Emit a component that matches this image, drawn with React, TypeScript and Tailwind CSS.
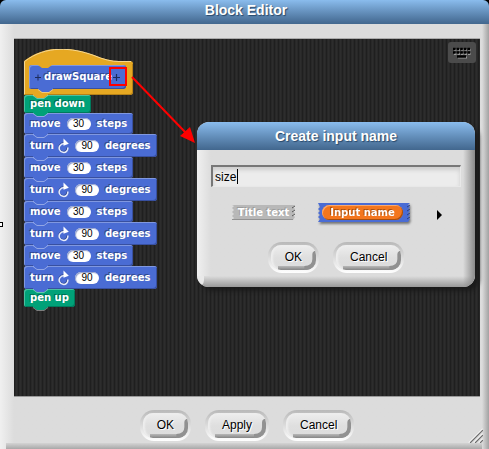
import { useState, type ReactNode } from "react";

const titleBar =
  "bg-linear-to-b from-[#8abced] to-[#42678e] text-center font-bold text-sm text-white [text-shadow:1px_1px_1px_#28486a] font-['Liberation_Sans',sans-serif]";

const blockText =
  "font-['DejaVu_Sans',sans-serif] text-[10px] font-bold leading-3 text-white whitespace-pre";

function PushButton({ children }: { children: ReactNode }) {
  return (
    <button
      type="button"
      className="rounded-[14px] bg-linear-to-b from-[#b9b9b9] via-[#dcdcdc] to-[#ffffff] p-[3px] font-['Liberation_Sans',sans-serif] text-xs text-black"
    >
      <span className="relative block h-[25px] overflow-hidden rounded-[10px] bg-linear-to-b from-[#eeeeee] via-[#dfdfdf] to-[#dcdcdc] px-[14px] leading-6 shadow-[inset_2px_0_2px_#eeeeee] [text-shadow:1px_1px_0_#ffffff]">
        <svg className="absolute right-0 bottom-0 h-[19px] w-full" aria-hidden="true">
          <defs>
            <linearGradient id="lip" x1="0" y1="0" x2="0" y2="1">
              <stop offset="0" stopColor="#b8b8b8" />
              <stop offset="1" stopColor="#858585" />
            </linearGradient>
          </defs>
          <rect x="7" y="15" width="100%" height="4" fill="url(#lip)" />
          <svg x="100%" overflow="visible">
            <path d="M-4 3 Q-4 1 -2 0 H0 V19 H-12 V15 Q-4 15 -4 8Z" fill="#919191" />
          </svg>
        </svg>
        <span className="relative">{children}</span>
      </span>
    </button>
  );
}

function Bump({ color }: { color: string }) {
  return (
    <svg className="absolute top-full left-[9px] z-10 -mt-px h-[5px] w-[15px]" viewBox="0 0 15 5" aria-hidden="true">
      <path d="M0 0H15V1L11 4H4L0 1Z" fill={color} />
      <path d="M0 1.5L4 4.5H11L15 1.5" fill="none" stroke="#ffffff" strokeOpacity=".4" />
    </svg>
  );
}

function Plus() {
  return (
    <svg className="h-[7px] w-[7px]" viewBox="0 0 7 7" aria-hidden="true">
      <path d="M3.5 0V7M0 3.5H7" stroke="#1d2c5c" strokeWidth="1.2" />
    </svg>
  );
}

function PenBlock({ text }: { text: string }) {
  return (
    <div className="relative h-[18px] w-fit rounded-[3px] bg-[#00a178] px-[6px] pt-[3px] shadow-[inset_1px_1px_0_#4cc0a0,inset_-1px_-1px_0_#007a5c]">
      <span className={`${blockText} block [text-shadow:-1px_-1px_0_#006b50]`}>{text}</span>
      <Bump color="#00a178" />
    </div>
  );
}

function MotionBlock({ turn, value, unit }: { turn?: boolean; value: string; unit: string }) {
  return (
    <div
      className={`relative flex w-fit items-center rounded-[3px] bg-[#4a6cd4] px-[6px] shadow-[inset_1px_1px_0_#8098e0,inset_-1px_-1px_0_#3850a0] ${turn ? "h-[23px]" : "h-[21px]"}`}
    >
      <span className={`${blockText} [text-shadow:-1px_-1px_0_#31488d]`}>{turn ? "turn" : "move"}</span>
      {turn && (
        <svg className="ml-1 h-4 w-[11px]" viewBox="0 0 11 16" aria-hidden="true">
          <path d="M9 9.5C9.3 12.5 7 14 4.7 13.6C1.4 13 0 9.6 1.6 7C2.6 5.4 4 4.6 6 4.6" fill="none" stroke="#31488d" strokeWidth="1.2" />
          <path d="M9.8 9.5C10.2 12.8 7.6 14.8 5 14.3C1.6 13.6 .2 10.3 1.8 7.8C2.8 6.2 4.2 5.4 6.2 5.4" fill="none" stroke="#e8edfb" strokeWidth="1.5" />
          <path d="M5.5 .5L10.8 5.8L5.5 7.8Z" fill="#ffffff" />
        </svg>
      )}
      <input
        aria-label={unit}
        defaultValue={value}
        className="mx-[6px] h-3 w-6 rounded-full bg-white text-center font-['Liberation_Sans',sans-serif] text-[10px] leading-3 text-black shadow-[inset_1px_1px_1px_#8d9cca]"
      />
      <span className={`${blockText} [text-shadow:-1px_-1px_0_#31488d]`}>{unit}</span>
      <Bump color="#4a6cd4" />
    </div>
  );
}

function HatBlock() {
  return (
    <div className="relative h-[46px] w-[109px] px-[5px] pt-4">
      <svg className="absolute inset-0 h-full w-full" viewBox="0 0 109 46" aria-hidden="true">
        <path d="M0 12C22 -5 48 -2 70 6Q84 12 95 12H106Q109 12 109 15V43Q109 46 106 46H0Z" fill="#e6a822" />
        <path d="M.5 45V12.5C22 -4 48 -1.5 70 6.5Q84 12.5 95 12.5H107" fill="none" stroke="#f5d793" />
        <path d="M108.5 15V43Q108.5 45.5 106 45.5H1" fill="none" stroke="#b58117" />
      </svg>
      <div className="relative flex h-6 w-[97px] items-center rounded-[3px] bg-[#4a6cd4] px-[6px] shadow-[inset_1px_1px_0_#8098e0,inset_-1px_-1px_0_#3850a0]">
        <svg className="absolute top-0 left-[9px] h-[3px] w-[14px]" viewBox="0 0 14 3" aria-hidden="true">
          <path d="M0 0L4 3H10L14 0Z" fill="#e6a822" />
        </svg>
        <Plus />
        <span className={`${blockText} ml-[3px] w-[67px] [text-shadow:-1px_-1px_0_#31488d]`}>drawSquare</span>
        <span className="ml-[2px] flex">
          <Plus />
        </span>
        <Bump color="#4a6cd4" />
        <span className="absolute top-[2px] right-[-1px] z-10 h-[19px] w-[18px] border-2 border-[#ff0000]" />
      </div>
      <Bump color="#e6a822" />
    </div>
  );
}

function InputDialog() {
  const [name, setName] = useState("size");
  return (
    <section
      role="dialog"
      aria-label="Create input name"
      className="absolute top-[83px] left-[183px] z-20 w-[278px] overflow-hidden rounded-xl bg-[#dcdcdc] shadow-[4px_4px_4px_#1b1b1b]"
    >
      <h2 className={`${titleBar} h-7 leading-7`}>Create input name</h2>
      <div className="bg-linear-to-r from-[#f0f0f0] via-[#dcdcdc] via-5% to-[#dcdcdc] px-[14px] pt-[15px]">
        <div className="relative">
          <input
            aria-label="Input name"
            value={name}
            onChange={(e) => setName(e.target.value)}
            className="block h-[22px] w-full border-t-2 border-l-2 border-r border-b border-t-[#777777] border-l-[#777777] border-r-[#e8e8e8] border-b-[#e8e8e8] bg-[#ececec] px-[2px] font-['Liberation_Sans',sans-serif] text-xs text-black shadow-[inset_0_3px_4px_#cdcdcd] outline-none"
          />
          <span className="absolute top-1 left-[26px] h-[15px] w-px bg-black" />
        </div>
        <div className="mt-4 flex h-[19px] items-center pl-[21px]">
          <label className="relative flex h-[15px] w-[63px] items-center justify-center">
            <input type="radio" name="kind" className="sr-only" />
            <svg className="absolute inset-0 h-full w-full" viewBox="0 0 63 15" aria-hidden="true">
              <path d="M0 0H63L61 2L63 4L61 6L63 8L61 10L63 12L61 15H0L2 13L0 11L2 9L0 7L2 5L0 3L2 1Z" fill="#b8b8b8" />
              <path d="M0 14.5H61" stroke="#929292" />
              <path d="M63 1L60 3M63 5L60 7M63 9L60 11" stroke="#555555" />
            </svg>
            <span className={`${blockText} relative [text-shadow:-1px_-1px_0_#9c9c9c]`}>Title text</span>
          </label>
          <label className="relative ml-[23px] flex h-[19px] w-[92px] items-center pl-1 drop-shadow-[1px_2px_1px_#777777]">
            <input type="radio" name="kind" className="sr-only" defaultChecked />
            <svg className="absolute inset-0 h-full w-full" viewBox="0 0 92 19" aria-hidden="true">
              <path d="M0 0H92L90 2L92 4L90 6L92 8L90 10L92 12L90 14L92 16L90 19H0L2 16L0 14L2 12L0 10L2 8L0 6L2 4Z" fill="#4a6cd4" />
              <path d="M92 2L89 4M92 6L89 8M92 10L89 12M92 14L89 16" stroke="#293f86" />
            </svg>
            <span
              className={`${blockText} relative h-[15px] w-[81px] rounded-full bg-[#f3761d] text-center leading-[15px] shadow-[inset_1px_1px_0_#f9a86d,inset_-1px_-1px_0_#a8500f] [text-shadow:-1px_-1px_0_#a8500f]`}
            >
              Input name
            </span>
          </label>
          <button type="button" aria-label="More options" className="ml-[27px]">
            <svg className="mt-1 h-[10px] w-[5px]" viewBox="0 0 5 10" aria-hidden="true">
              <path d="M0 0L5 5L0 10Z" fill="#000000" />
            </svg>
          </button>
        </div>
        <div className="flex justify-center gap-[14px] pt-5 pb-[3px]">
          <PushButton>OK</PushButton>
          <PushButton>Cancel</PushButton>
        </div>
      </div>
      <div className="h-[11px] bg-linear-to-b from-[#dcdcdc] to-[#999999]" />
      <div className="absolute top-7 right-0 bottom-0 w-3 bg-linear-to-r from-transparent to-[#8a8a8a]" />
      <div className="absolute bottom-0 left-0 h-[11px] w-[7px] rounded-br-full bg-[#e9e9e9]" />
    </section>
  );
}

function Arrow() {
  return (
    <svg className="absolute top-9 left-[116px] z-30 h-[72px] w-[68px]" viewBox="0 0 68 72" aria-hidden="true">
      <path d="M2 2L56 58" stroke="#ff0000" strokeWidth="2" />
      <path d="M65 68L50 61L60 52Z" fill="#ff0000" />
    </svg>
  );
}

export default function App() {
  return (
    <main className="relative flex h-screen flex-col overflow-hidden bg-[#dcdcdc]">
      <div className="bg-black">
        <h1 className={`${titleBar} h-6 rounded-t-[6px] pl-[3px] leading-[21px]`}>Block Editor</h1>
      </div>
      <div className="flex flex-1 flex-col bg-linear-to-r from-[#f0f0f0] to-[#dcdcdc] to-[14px] pt-[14px] pr-[9px] pl-[14px]">
        <div className="relative flex-1 border-t border-b border-t-[#aaaaaa] border-b-[#999999] bg-[repeating-linear-gradient(90deg,#1f1f1f_0_1px,#282828_1px_2px,#2d2d2d_2px_3px,#282828_3px_4px)] pt-[10px] pl-[10px]">
          <HatBlock />
          <PenBlock text="pen down" />
          {[0, 1, 2, 3].map((i) => (
            <div key={i}>
              <MotionBlock value="30" unit="steps" />
              <MotionBlock turn value="90" unit="degrees" />
            </div>
          ))}
          <PenBlock text="pen up" />
          <button
            type="button"
            aria-label="Keyboard entry"
            className="absolute top-[3px] right-1 flex h-[21px] w-7 items-center justify-center rounded-[3px] bg-[#4b4b4b]"
          >
            <svg className="h-3 w-[18px]" viewBox="0 0 18 12" aria-hidden="true">
              <g stroke="#9a9a9a" strokeWidth="2" transform="translate(1 1)">
                <path d="M0 2H17M0 6H17" strokeDasharray="2.5 1" />
                <path d="M4 9.5H13" />
              </g>
              <g stroke="#000000" strokeWidth="2.5">
                <path d="M0 2H18M0 5.5H18" strokeDasharray="2.6 1" />
                <path d="M4 9.5H13" />
              </g>
            </svg>
          </button>
          <Arrow />
          <InputDialog />
        </div>
        <footer className="flex justify-center gap-[14px] pt-[13px] pb-2">
          <PushButton>OK</PushButton>
          <PushButton>Apply</PushButton>
          <PushButton>Cancel</PushButton>
        </footer>
      </div>
      <div className="absolute right-0 bottom-0 left-[6px] h-[6px] bg-linear-to-b from-[#d4d4d4] to-[#a8a8a8]" />
      <div className="absolute top-6 right-0 bottom-0 w-[7px] bg-linear-to-r from-[#dcdcdc] to-[#a2a2a2]" />
      <svg className="absolute right-[6px] bottom-[6px] h-[15px] w-[15px]" viewBox="0 0 15 15" aria-hidden="true">
        <path d="M1 15L15 1M6 15L15 6M11 15L15 11" stroke="#ffffff" strokeWidth="1.5" />
        <path d="M2 15L15 2M7 15L15 7M12 15L15 12" stroke="#6c6c6c" strokeWidth="1.2" />
      </svg>
      <span className="absolute top-[222px] left-[-2px] h-[5px] w-[5px] border border-black bg-white" />
    </main>
  );
}
